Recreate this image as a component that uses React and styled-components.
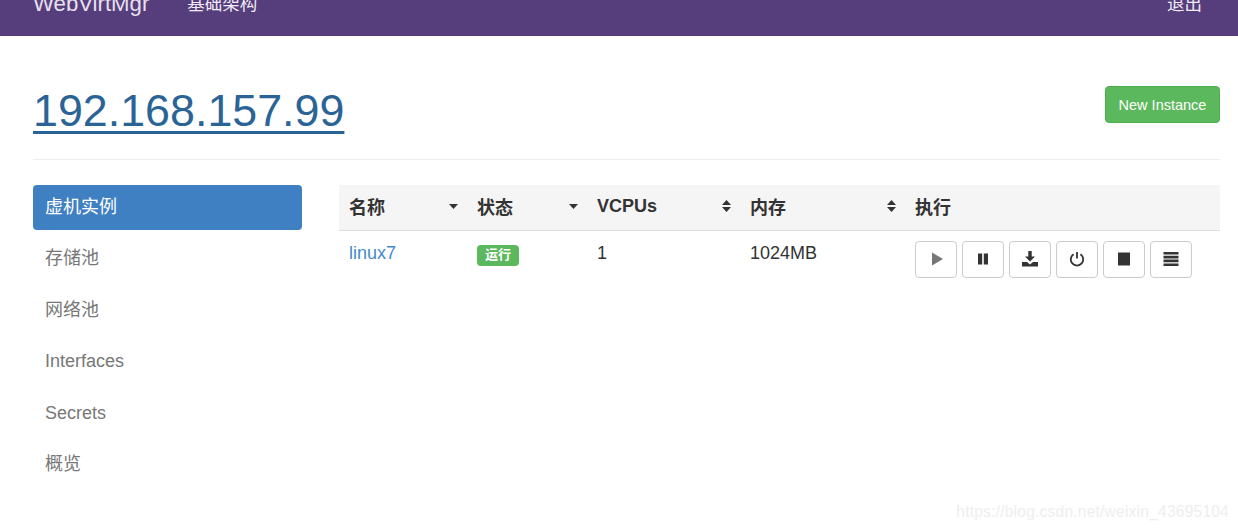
import React from "react";
import styled, { createGlobalStyle } from "styled-components";

const GlobalStyle = createGlobalStyle`
  html, body {
    margin: 0;
    padding: 0;
    background: #fff;
  }
  body {
    font-family: "Liberation Sans", "Noto Sans CJK SC", sans-serif;
    font-size: 18px;
    color: #333;
  }
`;

const Page = styled.div`
  position: relative;
  width: 1238px;
  height: 530px;
  overflow: hidden;
`;

const Navbar = styled.nav`
  display: flex;
  align-items: flex-end;
  height: 36px;
  padding: 0 36px 0 33px;
  background: #563d7c;
  box-sizing: border-box;
  overflow: hidden;
`;

const Brand = styled.a`
  font-size: 22.2px;
  line-height: 28px;
  margin-bottom: 18px;
  color: #e6e0ee;
`;

const NavLink = styled.a`
  font-size: 17.5px;
  line-height: 24px;
  margin-bottom: 20px;
  margin-left: ${(p) => (p.$right ? "auto" : "38px")};
  color: #efeaf4;
`;

const Content = styled.main`
  padding: 0 18px 0 33px;
`;

const Header = styled.header`
  display: flex;
  justify-content: space-between;
  align-items: flex-start;
  height: 124px;
  box-sizing: border-box;
  padding-top: 50px;
  border-bottom: 1px solid #eee;
`;

const Title = styled.a`
  font-size: 44.8px;
  line-height: 48px;
  color: #2a6496;
  text-decoration: underline;
  text-decoration-thickness: 3px;
  text-underline-offset: 5px;
`;

const NewButton = styled.button`
  width: 115px;
  height: 37px;
  padding: 0;
  font: 14.5px "Liberation Sans", sans-serif;
  color: #fff;
  background: #5cb85c;
  border: 1px solid #4cae4c;
  border-radius: 4px;
`;

const Columns = styled.div`
  display: flex;
  gap: 37px;
  margin-top: 25px;
`;

const Sidebar = styled.ul`
  display: flex;
  flex-direction: column;
  gap: 6.4px;
  width: 269px;
  flex: none;
  margin: 0;
  padding: 0;
  list-style: none;
`;

const SideItem = styled.li`
  height: 45px;
  line-height: 44px;
  padding-left: 12px;
  border-radius: 4px;
  color: ${(p) => (p.$active ? "#fff" : "#777")};
  background: ${(p) => (p.$active ? "#3f80c3" : "transparent")};
`;

const Table = styled.table`
  width: 881px;
  border-collapse: collapse;
  table-layout: fixed;
`;

const HeadCell = styled.th`
  width: ${(p) => p.$w};
  height: 45px;
  padding: 0 9px 2px 10px;
  box-sizing: border-box;
  text-align: left;
  font-weight: bold;
  color: #333;
  background: #f5f5f5;
  border-bottom: 1px solid #ddd;
`;

const HeadInner = styled.div`
  display: flex;
  justify-content: space-between;
  align-items: center;
`;

const Cell = styled.td`
  height: 57px;
  padding: 10px;
  box-sizing: border-box;
  vertical-align: top;
  line-height: 24px;
  color: #333;
`;

const NameLink = styled.a`
  color: #428bca;
`;

const Badge = styled.span`
  display: inline-block;
  width: 42px;
  height: 21px;
  margin-top: 4px;
  line-height: 19px;
  text-align: center;
  font-size: 13px;
  font-weight: bold;
  color: #fff;
  background: #5cb85c;
  border-radius: 4px;
  vertical-align: top;
`;

const Actions = styled.div`
  display: flex;
  gap: 5px;
`;

const IconButton = styled.button`
  display: flex;
  align-items: center;
  justify-content: center;
  width: 42px;
  height: 37px;
  padding: 0;
  background: #fff;
  border: 1px solid #ccc;
  border-radius: 4px;
  color: ${(p) => (p.$muted ? "#777" : "#333")};
`;

const Watermark = styled.div`
  position: absolute;
  right: 9px;
  bottom: 9px;
  font-size: 15.6px;
  letter-spacing: 0.2px;
  color: #eeeeee;
`;

const SortDown = () => (
  <svg width="9" height="5" viewBox="0 0 9 5">
    <path d="M0 0h9L4.5 5z" fill="#333" />
  </svg>
);

const SortBoth = () => (
  <svg width="9" height="12" viewBox="0 0 9 12">
    <path d="M0 5L4.5 0 9 5zM0 7h9L4.5 12z" fill="#333" />
  </svg>
);

const Icon = ({ d }) => (
  <svg width="16" height="16" viewBox="0 0 16 16" fill="currentColor">
    <path d={d} />
  </svg>
);

const PowerIcon = () => (
  <svg width="16" height="16" viewBox="0 0 16 16" fill="none" stroke="#333" strokeWidth="1.8">
    <path d="M4.6 3.2A6.2 6.2 0 1 0 11.4 3.2" />
    <path d="M8 1v6.5" />
  </svg>
);

const icons = [
  { key: "play", muted: true, d: "M4 1.5L15 8 4 14.5z" },
  { key: "pause", d: "M3 2.5h4.2v11H3zM8.8 2.5H13v11H8.8z" },
  { key: "save", d: "M6.3 0h3.4v5.5H13L8 10.5 3 5.5h3.3zM0 11h5l3 2.4L11 11h5v4.5H0z" },
  { key: "power" },
  { key: "stop", d: "M2 1.5h12v13H2z" },
  { key: "menu", d: "M.5 1h15v2.6H.5zM.5 4.8h15v2.6H.5zM.5 8.6h15v2.6H.5zM.5 12.4h15V15H.5z" },
];

const columns = [
  { label: "名称", w: "128px", sort: <SortDown /> },
  { label: "状态", w: "120px", sort: <SortDown /> },
  { label: "VCPUs", w: "153px", sort: <SortBoth /> },
  { label: "内存", w: "165px", sort: <SortBoth /> },
  { label: "执行", w: "315px" },
];

const sideItems = ["虚机实例", "存储池", "网络池", "Interfaces", "Secrets", "概览"];

export default function App() {
  return (
    <Page>
      <GlobalStyle />
      <Navbar>
        <Brand>WebVirtMgr</Brand>
        <NavLink>基础架构</NavLink>
        <NavLink $right>退出</NavLink>
      </Navbar>
      <Content>
        <Header>
          <Title>192.168.157.99</Title>
          <NewButton>New Instance</NewButton>
        </Header>
        <Columns>
          <Sidebar>
            {sideItems.map((item, i) => (
              <SideItem key={item} $active={i === 0}>
                {item}
              </SideItem>
            ))}
          </Sidebar>
          <Table>
            <thead>
              <tr>
                {columns.map((c) => (
                  <HeadCell key={c.label} $w={c.w}>
                    <HeadInner>
                      {c.label}
                      {c.sort}
                    </HeadInner>
                  </HeadCell>
                ))}
              </tr>
            </thead>
            <tbody>
              <tr>
                <Cell>
                  <NameLink>linux7</NameLink>
                </Cell>
                <Cell>
                  <Badge>运行</Badge>
                </Cell>
                <Cell>1</Cell>
                <Cell>1024MB</Cell>
                <Cell>
                  <Actions>
                    {icons.map((ic) => (
                      <IconButton key={ic.key} $muted={ic.muted}>
                        {ic.key === "power" ? <PowerIcon /> : <Icon d={ic.d} />}
                      </IconButton>
                    ))}
                  </Actions>
                </Cell>
              </tr>
            </tbody>
          </Table>
        </Columns>
      </Content>
      <Watermark>https://blog.csdn.net/weixin_43695104</Watermark>
    </Page>
  );
}
